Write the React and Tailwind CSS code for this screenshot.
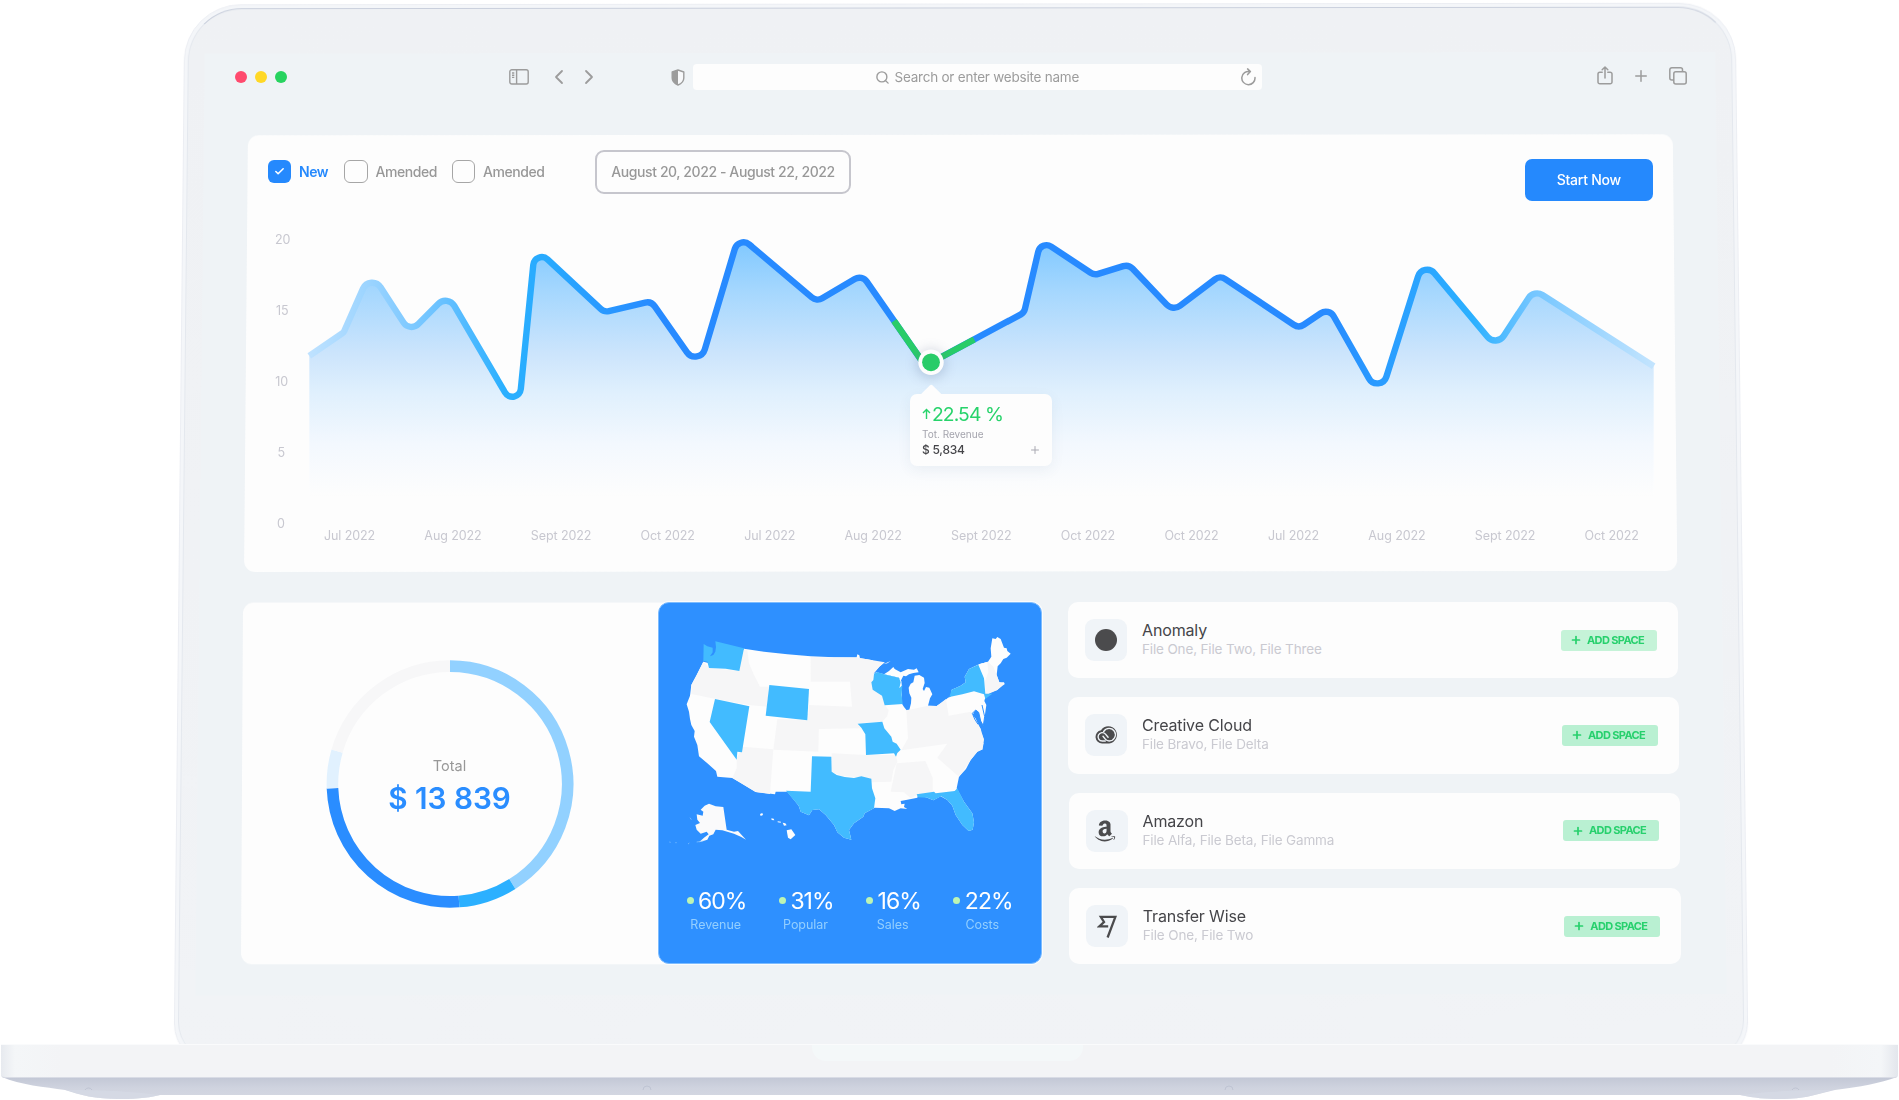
import React from "react";
import { FaAmazon } from "react-icons/fa";
import { ChevronLeft, ChevronRight, Search, Plus, Check } from "lucide-react";

const POINTS = [
  [309.6, 355.5], [344, 332, 5], [370.8, 271.5, 10], [410.3, 332.2, 9.5], [447.9, 294.2, 10],
  [518.5, 414.7, 8.5], [535.3, 247.4, 8.5], [604.5, 311.9, 9], [651.4, 300.9, 9], [699.2, 368.9, 10],
  [739.1, 235.3, 9], [817, 301.2, 9], [862.3, 274.4, 9], [925.5, 365.4, 8], [1024.4, 312.3, 8],
  [1041.3, 239.5, 8.5], [1094.5, 274.8, 9], [1128.9, 264.2, 9], [1173.2, 310.8, 10], [1220.3, 275.2, 9],
  [1299.1, 327.8, 9], [1329.2, 307.5, 9], [1380.1, 397.2, 9.5], [1423.6, 259.6, 9.5], [1496.6, 347, 10],
  [1534.4, 289.3, 10], [1654, 366],
];

// Joins the vertices with straight lines whose corners are circular arcs.
function roundedLine(points) {
  let d = `M${points[0][0]},${points[0][1]}`;
  for (let i = 1; i < points.length - 1; i++) {
    const [x, y, r] = points[i];
    const [px, py] = points[i - 1];
    const [nx, ny] = points[i + 1];
    const la = Math.hypot(px - x, py - y);
    const lb = Math.hypot(nx - x, ny - y);
    const ax = (px - x) / la, ay = (py - y) / la;
    const bx = (nx - x) / lb, by = (ny - y) / lb;
    const angle = Math.acos(ax * bx + ay * by);
    const t = Math.min(r / Math.tan(angle / 2), la * 0.6, lb * 0.6);
    const rr = t * Math.tan(angle / 2);
    const sweep = ax * by - ay * bx < 0 ? 1 : 0;
    d += ` L${x + ax * t},${y + ay * t} A${rr},${rr} 0 0 ${sweep} ${x + bx * t},${y + by * t}`;
  }
  const last = points[points.length - 1];
  return d + ` L${last[0]},${last[1]}`;
}

const LINE = roundedLine(POINTS);

function Lid() {
  return (
    <div className="absolute left-[179px] top-[-1.5px] h-[1061px] w-[1563px] rounded-t-[57px] rounded-b-[40px] border border-[#eceef3] bg-[#f4f6f9] outline outline-transparent [transform:perspective(3000px)_rotateX(2.48deg)_rotate(-0.06deg)]">
      <div className="absolute inset-x-[3px] bottom-[3px] top-[3px] rounded-t-[54px] rounded-b-[38px] border-x border-t-[1.5px] border-x-[#e4e8ee] border-t-[#c9cfdc] bg-gradient-to-b from-[#eff1f4] to-[#f1f3f6]">
        <div className="absolute inset-x-[16px] top-[45px] h-[943px] bg-[#eff3f6]" />
      </div>
    </div>
  );
}

function Base() {
  return (
    <div className="absolute left-0 top-[1044px] w-[1899px]">
      <svg className="absolute left-0 top-[32px] h-[24px] w-[1899px]" viewBox="0 0 1899 24">
        <defs>
          <linearGradient id="under" x1="0" y1="0" x2="0" y2="1">
            <stop offset="0" stopColor="#c2c7d5" />
            <stop offset="0.5" stopColor="#cfd3df" />
            <stop offset="1" stopColor="#d5d8e2" />
          </linearGradient>
        </defs>
        <path d="M2 1 C20 9 45 11 65 14 C80 19 95 23 120 23 C140 23 152 21 160 19 L1740 19 C1755 22 1765 23 1780 23 C1805 23 1818 18 1835 14 C1860 11 1880 7 1897 1 Z" fill="url(#under)" />
        <path d="M66 14 C80 19 95 23 120 23 C140 23 152 21 160 19 C130 15 100 14 66 14 Z" fill="#d6dae5" opacity="0.7" />
        <path d="M1833 14 C1818 18 1805 23 1780 23 C1765 23 1755 22 1740 19 C1770 15 1800 14 1833 14 Z" fill="#d6dae5" opacity="0.7" />
        <g fill="none" stroke="#bfc4d3" strokeWidth="1">
          <path d="M85 14a4 4 0 0 1 7 0M643 14a4 4 0 0 1 8 0M1225 14a4 4 0 0 1 8 0M1792 14a4 4 0 0 1 7 0" />
        </g>
      </svg>
      <div className="relative mx-px h-[34px] rounded-b-[4px] border-t border-t-[#fafbfc] border-b border-b-[#d9dce5] bg-[linear-gradient(90deg,#e7eaef_0px,#f4f6f8_14px,#f3f4f6_60px,#f3f4f6_1830px,#f4f6f8_1880px,#e3e6ec_1897px)]">
        <div className="relative -left-[2px] mx-auto h-[16px] w-[271px] rounded-b-[14px] bg-[#f4f8f9]" />
      </div>
    </div>
  );
}

function BrowserBar() {
  return (
    <header className="flex h-[26px] w-[1432px] items-center text-[#9c9c9c] [&>*]:shrink-0">
      <div className="-ml-[10.5px] flex w-[274px] gap-[7.7px]">
        <span className="size-[12.5px] rounded-full bg-[#ff4a6e]" />
        <span className="size-[12.5px] rounded-full bg-[#ffd826]" />
        <span className="size-[12.5px] rounded-full bg-[#27d35f]" />
      </div>
      <svg className="h-[16px] w-[20px]" viewBox="0 0 20 16" fill="none" stroke="currentColor" strokeWidth="1.4">
        <rect x="0.8" y="0.8" width="18.4" height="14.2" rx="2" />
        <path d="M7.6 1v14M3 4h2.3M3 6.2h2.3M3 8.4h2.3" />
      </svg>
      <ChevronLeft className="ml-[18px] size-[24px]" strokeWidth={1.8} />
      <ChevronRight className="ml-[6px] size-[24px]" strokeWidth={1.8} />
      <svg className="ml-[70.5px] h-[17px] w-[14px]" viewBox="0 0 14 17">
        <path d="M7 1 L12.8 3 V9 C12.8 12.5 10 14.8 7 16 C4 14.8 1.2 12.5 1.2 9 V3 Z" fill="#f7f8fa" stroke="currentColor" strokeWidth="1.4" strokeLinejoin="round" />
        <path d="M7 1 L1.2 3 V9 C1.2 12.5 4 14.8 7 16 Z" fill="currentColor" />
      </svg>
      <div className="ml-[8px] flex h-[26px] w-[568.5px] items-center rounded-[4px] bg-[#fdfdfd] pr-[5px]">
        <Search className="ml-[182px] size-[15px]" strokeWidth={2.2} />
        <span className="ml-[4.5px] flex-1 whitespace-nowrap text-[13.5px] leading-[26px] tracking-[-0.23px]">Search or enter website name</span>
        <svg className="h-[18px] w-[17px]" viewBox="0 0 17 18" fill="none" stroke="currentColor" strokeWidth="1.5" strokeLinecap="round" strokeLinejoin="round">
          <path d="M9.8 3.6 A6.6 6.6 0 1 0 15 9.6 M7.6 0.9 L10.4 3.6 L7.6 6.6" />
        </svg>
      </div>
      <div className="-mt-[3px] ml-[335px] flex items-center gap-[19.5px]">
        <svg className="h-[19px] w-[16px]" viewBox="0 0 16 19" fill="none" stroke="currentColor" strokeWidth="1.5" strokeLinecap="round" strokeLinejoin="round">
          <path d="M5.2 6.2 H2.8 a1.8 1.8 0 0 0 -1.8 1.8 V16 a1.8 1.8 0 0 0 1.8 1.8 H13.2 a1.8 1.8 0 0 0 1.8 -1.8 V8 a1.8 1.8 0 0 0 -1.8 -1.8 H10.8 M8 12 V1.2 M5.2 3.8 L8 1 L10.8 3.8" />
        </svg>
        <Plus className="size-[18px]" strokeWidth={2} />
        <svg className="-ml-[1px] h-[18px] w-[18px]" viewBox="0 0 18 18" fill="none" stroke="currentColor" strokeWidth="1.5">
          <rect x="4.8" y="4.8" width="12.4" height="12.2" rx="2" />
          <path d="M4.8 13 H2.8 a2 2 0 0 1 -2 -2 V2.8 a2 2 0 0 1 2 -2 H11.5 a2 2 0 0 1 2 2 V4.8" />
        </svg>
      </div>
    </header>
  );
}

function Option({ label, checked, className }) {
  return (
    <label className={"flex items-center gap-[8px] text-[14px] tracking-[-0.45px] " + className}>
      {checked ? (
        <span className="flex size-[23px] items-center justify-center rounded-[6px] bg-[#2589fd] text-white">
          <Check className="size-[11px]" strokeWidth={3.4} />
        </span>
      ) : (
        <span className="size-[23.5px] rounded-[6px] border-[1.5px] border-[#a6a6a6]" />
      )}
      <span className={checked ? "font-semibold text-[#2589fd]" : "font-medium text-[#989898]"}>{label}</span>
    </label>
  );
}

function Tooltip() {
  return (
    <div className="absolute left-[601px] top-[184px] h-[72px] w-[142px] rounded-[7px] bg-[#fdfdfd] px-[12px] pt-[8px] shadow-[0_4px_14px_rgba(60,80,120,0.07)]">
      <span className="absolute left-[14px] top-[-7px] size-[14.5px] rotate-45 rounded-tl-[2px] bg-[#fdfdfd]" />
      <div className="relative -top-[0.5px] flex h-[24px] items-center text-[#27d36b]">
        <svg className="h-[12px] w-[9px]" viewBox="0 0 9 12" fill="none" stroke="currentColor" strokeWidth="1.4">
          <path d="M4.5 11V1.5M1 5L4.5 1.5L8 5" />
        </svg>
        <span className="ml-[1px] text-[19.3px] leading-[24px] tracking-[-0.9px]">22.54 %</span>
      </div>
      <div className="text-[10px] leading-[16px] text-[#a4a4ad]">Tot. Revenue</div>
      <div className="flex items-center justify-between">
        <span className="text-[12px] font-medium leading-[16px] tracking-[-0.25px] text-[#454549]">$ 5,834</span>
        <Plus className="-mr-[1px] size-[12px] text-[#a9a9b2]" strokeWidth={2} />
      </div>
    </div>
  );
}

const MONTHS = ["Jul", "Aug", "Sept", "Oct", "Jul", "Aug", "Sept", "Oct", "Oct", "Jul", "Aug", "Sept", "Oct"];

function ChartCard() {
  return (
    <section className="relative mt-[44px] h-[436.5px] w-[1431px]">
      <div className="absolute inset-y-0 left-[1px] right-[1px] rounded-[11px] bg-[#fdfdfd] outline outline-transparent [transform:perspective(3000px)_rotateX(2.3deg)_rotate(-0.04deg)]" />
      <div className="relative pt-[16px]">
        <div className="flex h-[60px] items-start pl-[23px]">
          <div className="flex h-[43px] items-center">
            <Option label="New" checked className="w-[76px]" />
            <Option label="Amended" className="w-[107.5px]" />
            <Option label="Amended" className="w-[143.5px]" />
            <div className="flex h-[44px] w-[256px] items-center justify-center rounded-[9px] border-2 border-[#c6c6cd] text-[14px] font-medium tracking-[-0.41px] text-[#989898]">
              <span className="whitespace-nowrap">August 20, 2022 - August 22, 2022</span>
            </div>
          </div>
          <button className="ml-[674px] mt-[8.5px] h-[42px] w-[127.5px] rounded-[7px] bg-[#2589fd] text-[14px] font-medium tracking-[-0.25px] text-white">Start Now</button>
        </div>
        <div className="relative flex h-[315px]">
          <div className="flex w-[64px] flex-col items-center pl-[23px] pr-[15px] pt-[21px] text-[12.5px] leading-[18px] text-[#c8c8d0]">
            <div className="flex h-[301.5px] shrink-0 flex-col items-center justify-between">
              <span className="ml-[3.5px]">20</span>
              <span className="ml-[2.5px]">15</span>
              <span className="ml-[1.5px]">10</span>
              <span className="ml-[0.5px]">5</span>
              <span>0</span>
            </div>
          </div>
          <div className="relative h-[290px] w-[1346px]">
            <svg className="h-[290px] w-[1346px] overflow-visible" viewBox="309 210 1346 290">
              <defs>
                <linearGradient id="area" gradientUnits="userSpaceOnUse" x1="0" y1="240" x2="0" y2="495">
                  <stop offset="0" stopColor="#7fc8ff" />
                  <stop offset="0.2" stopColor="#a5d7fe" />
                  <stop offset="0.45" stopColor="#cde5fc" />
                  <stop offset="0.6" stopColor="#e0f0fd" />
                  <stop offset="0.8" stopColor="#f3f8fe" />
                  <stop offset="1" stopColor="#fdfdfd" />
                </linearGradient>
                <linearGradient id="stroke" gradientUnits="userSpaceOnUse" x1="309" y1="0" x2="1654" y2="0">
                  <stop offset="0" stopColor="#bfe2ff" />
                  <stop offset="0.047" stopColor="#99d3ff" />
                  <stop offset="0.1" stopColor="#68c1ff" />
                  <stop offset="0.145" stopColor="#2bb0ff" />
                  <stop offset="0.18" stopColor="#28a9fe" />
                  <stop offset="0.22" stopColor="#2998ff" />
                  <stop offset="0.26" stopColor="#278aff" />
                  <stop offset="0.755" stopColor="#278aff" />
                  <stop offset="0.8" stopColor="#2a9dff" />
                  <stop offset="0.865" stopColor="#2bb0ff" />
                  <stop offset="0.91" stopColor="#74c6ff" />
                  <stop offset="1" stopColor="#c3e4fe" />
                </linearGradient>
                <filter id="glow" x="-150%" y="-150%" width="400%" height="400%">
                  <feGaussianBlur stdDeviation="6" />
                </filter>
              </defs>
              <g transform="translate(-0.3 0.3)">
                <path d={LINE + " V495 H309.6 Z"} fill="url(#area)" />
                <path d={LINE} fill="none" stroke="url(#stroke)" strokeWidth="6.4" />
                <path d="M894.3 320.6 L925.5 365.4 L974.5 339.2" fill="none" stroke="#29cc68" strokeWidth="6.4" />
              </g>
              <circle cx="931" cy="364" r="15" fill="#5a6a90" opacity="0.25" filter="url(#glow)" />
              <circle cx="931" cy="362.3" r="12.7" fill="#fdfdfd" />
              <circle cx="931" cy="362.3" r="8.9" fill="#29cc68" />
            </svg>
            <Tooltip />
          </div>
        </div>
        <div className="ml-[79px] flex w-[1315px] justify-between text-[12.5px] leading-[21px] tracking-[-0.1px] text-[#c8c8d0]">
          {MONTHS.map((m, i) => (
            <span key={i} className="whitespace-nowrap">{m} 2022</span>
          ))}
        </div>
      </div>
    </section>
  );
}

const SEGMENTS = [
  { from: 0, to: 148, color: "#92d1ff" },
  { from: 148, to: 175.6, color: "#2bb0ff" },
  { from: 175.6, to: 267.9, color: "#2a8dff" },
  { from: 267.9, to: 286.2, color: "#e1f1fe" },
  { from: 286.2, to: 360, color: "#f7f7f8" },
];

function arc(from, to) {
  const p = (a) => {
    const t = ((a - 90) * Math.PI) / 180;
    return `${124 + 117.6 * Math.cos(t)},${124 + 117.9 * Math.sin(t)}`;
  };
  return `M${p(from)} A117.6,117.9 0 ${to - from > 180 ? 1 : 0} 1 ${p(to)}`;
}

function TotalCard() {
  return (
    <section className="relative h-[362px] w-[431px] shrink-0">
      <div className="absolute inset-0 rounded-[11px] bg-[#fdfdfd] outline outline-transparent [transform-origin:100%_50%] [transform:perspective(3000px)_rotateX(2.2deg)]" />
      <div className="relative ml-[83.5px] mt-[57.5px] size-[248px]">
        <svg className="absolute inset-0 size-[248px]" viewBox="0 0 248 248">
          {SEGMENTS.map((s) => (
            <path key={s.from} d={arc(s.from, s.to)} fill="none" stroke={s.color} strokeWidth="11.6" />
          ))}
        </svg>
        <div className="relative flex flex-col items-center pt-[95px]">
          <span className="text-[14.5px] leading-[22px] text-[#989898]">Total</span>
          <span className="whitespace-nowrap text-[29.7px] font-semibold leading-[43px] text-[#2a8dff]">$ 13 839</span>
        </div>
      </div>
    </section>
  );
}

function UsMap() {
  return (
    <svg className="h-[220px] w-[383px]" viewBox="12 99 1149 660">
      <g fill="#fdfdfd">
        <path d="M166 205L210 190L262 175L270 161L330 170L400 178L470 184L540 187L608 187L610 178L616 181L618 190L640 193L655 196L665 203L692 202L676 215L658 236L668 232L690 238L735 248L742 258L744 275L743 325L750 336L758 346L766 344L771 325L772 308L766 295L764 278L770 266L778 262L782 242L796 240L810 248L812 264L806 282L810 288L816 276L826 278L835 298L828 310L822 332L848 333L866 322L882 308L890 305L893 284L920 272L935 262L932 245L945 222L975 208L1002 200L1012 185L1010 160L1015 130L1025 132L1030 126L1040 132L1050 158L1058 160L1060 168L1070 176L1058 188L1048 192L1040 205L1031 214L1028 240L1036 262L1050 262L1052 267L1040 272L1030 285L1010 292L996 300L991 318L997 330L992 365L988 392L980 378L974 352L965 345L960 352L955 362L966 372L968 385L980 402L980 410L970 410L984 420L990 434L975 432L978 442L990 446L976 456L986 463L970 470L950 495L936 522L915 545L908 580L930 620L955 655L960 682L956 704L944 708L925 690L905 660L895 632L880 615L860 604L838 616L820 608L792 600L790 608L760 614L740 618L742 628L752 626L750 636L760 642L740 640L722 648L705 640L662 638L632 655L628 665L600 685L585 705L592 734L570 728L550 712L540 690L515 660L495 643L475 645L465 661L440 650L434 632L400 590L365 590L363 598L305 591L262 565L235 549L190 545L186 528L160 505L135 484L130 450L120 425L122 408L112 390L108 372L105 350L98 328L108 302L112 270L128 240L148 200Z" />
        <path d="M690 238L705 228L718 216L722 222L740 232L762 222L780 224L788 220L794 232L778 234L765 238L756 244L748 242L740 258L735 248Z" />
        <path d="M688 208L710 198L700 205Z" />
        <path d="M398 706L412 703L424 720L410 733L402 728Z" />
        <path d="M318 657l7-3 2 6-7 3zM352 670l7 1 2 5-8-1zM371 679l10 1-1 3-9-1zM386 683l8 2 4 6-8 1z" />
      </g>
      <g fill="#f6f6f7">
        <path d="M148 200L165 218L255 228L268 165L280 166L285 205L300 240L318 275L345 275L340 335L285 330L185 312L112 297L112 270L128 240Z" />
        <path d="M470 186L612 188L692 202L676 215L658 236L653 265L658 285L685 300L692 330L704 345L700 362L685 380L612 385L620 400L495 402L370 372L462 376L465 330L594 335L588 260L470 260Z" />
        <path d="M370 372L495 385L493 470L358 464Z" />
        <path d="M266 455L358 463L348 597L305 591L235 549L248 520L248 490Z" />
        <path d="M533 475L636 480L726 480L730 500L718 525L712 560L652 562L650 550L600 546L560 542L533 530Z" />
        <path d="M766 344L822 332L848 333L876 312L884 362L950 350L965 372L980 402L990 434L986 463L970 470L950 495L915 545L850 488L880 446L742 466L762 430L757 345Z" />
        <path d="M728 505L814 498L836 548L836 590L790 600L770 610L750 592L710 590Z" />
        <path d="M975 208L1002 200L1018 215L1028 240L1036 262L1052 267L1030 285L996 300L992 260L1000 240Z" />
      </g>
      <path d="M140 644L152 632L165 626L185 634L208 636L218 704L240 710L252 708L276 734L262 726L240 716L205 706L185 704L178 718L166 722L160 734L135 742L150 728L164 718L158 710L140 716L128 704L124 690L138 684L130 674L128 658L146 662L148 650Z" fill="#fafafb" />
      <path d="M975 208L1000 202L1003 232L992 258Z" fill="#fdfdfd" />
      <path d="M984 330L992 365L988 392L980 378L974 352L965 345L955 355L962 372L972 388" fill="none" stroke="#2e90ff" strokeWidth="3" />
      <path d="M102 747l4-3M128 741l20-3M108 668l4 6M46 741l4 1M64 743l4 0" stroke="#8fc8ff" strokeWidth="2" />
      <g fill="#42bbff">
        <path d="M149 147L160 154L176 158L176 172L168 184L178 180L184 170L186 156L184 139L270 160L256 228L215 221L165 219L160 200L148 198Z" />
        <path d="M346 270L465 282L460 376L335 362Z" />
        <path d="M183 312L286 334L264 472L250 470L248 494L167 381Z" />
        <path d="M660 236L670 231L690 238L735 248L740 262L736 280L745 270L743 300L746 327L692 331L684 302L656 284L652 262L658 255Z" />
        <path d="M611 386L685 380L691 400L712 425L716 440L728 446L740 464L730 474L726 485L720 475L636 480L634 418L622 398Z" />
        <path d="M474 484L532 485L533 530L548 540L572 546L600 549L622 544L652 551L654 580L664 610L660 640L632 655L628 665L600 685L585 705L592 734L570 728L550 712L540 690L515 660L495 643L475 645L465 661L440 650L434 632L396 587L470 590Z" />
        <path d="M788 598L840 590L845 595L902 588L910 580L930 620L955 655L960 682L956 704L944 708L925 690L905 660L895 632L880 615L862 604L838 616L820 608L792 607Z" />
        <path d="M886 306L893 284L920 272L935 262L932 245L945 222L973 209L990 250L994 296L1015 296L994 312L990 298L960 289L925 298Z" />
      </g>
    </svg>
  );
}

const STATS = [
  ["60%", "Revenue"],
  ["31%", "Popular"],
  ["16%", "Sales"],
  ["22%", "Costs"],
];

function MapCard() {
  return (
    <section className="relative z-10 -ml-[15px] h-[362px] w-[383.5px] shrink-0">
      <div className="absolute inset-0 rounded-[11px] border border-[#7dbcff] bg-[#2e90ff] shadow-[0_0_0_1px_rgba(255,255,255,0.7)]" />
      <div className="relative pt-[25.5px]">
        <UsMap />
        <div className="flex justify-between pl-[28.5px] pr-[29px] pt-[40px]">
          {STATS.map(([value, label]) => (
            <div key={label} className="flex flex-col items-center">
              <div className="flex items-center gap-[4.5px]">
                <span className="size-[7px] rounded-full bg-[#bdf5b4]" />
                <span className="text-[23px] leading-[26px] tracking-[-1px] text-white">{value}</span>
              </div>
              <span className="mr-[1.5px] text-[12.5px] leading-[22px] tracking-[-0.05px] text-[#93cfff]">{label}</span>
            </div>
          ))}
        </div>
      </div>
    </section>
  );
}

function CloudLogo() {
  return (
    <svg className="h-[18px] w-[23px]" viewBox="0 0 23 18">
      <path d="M7.2 17.4 a6.6 6.6 0 0 1 -1.2 -13.1 A8.6 8.6 0 1 1 14.2 17.4 Z" fill="#4b4b4d" />
      <g fill="none" stroke="#f0f4f8" strokeWidth="1.4" strokeLinecap="round">
        <path d="M8.6 5.6 a6.3 6.3 0 1 1 5.6 9.4 c-1.7 0 -2.9 -0.7 -3.9 -1.9 l-2.3 -2.8" />
        <path d="M10.3 15 H7.3 a4.2 4.2 0 1 1 3.2 -6.9 l2.6 3.1" />
      </g>
    </svg>
  );
}

function WiseLogo() {
  return (
    <svg className="h-[23px] w-[20px]" viewBox="0 0 20 23" fill="none" stroke="#4b4b4d" strokeWidth="2.3">
      <path d="M10.6 22.5 L18.4 1.8 H3.8 L7 7 L2.4 11.4 H11.2" />
    </svg>
  );
}

const FILES = [
  { name: "Anomaly", files: "File One, File Two, File Three", icon: <span className="size-[21.5px] rounded-full bg-[#4b4b4d]" />, row: "w-[609.5px]", tag: "bg-[#c5f3d8]" },
  { name: "Creative Cloud", files: "File Bravo, File Delta", icon: <CloudLogo />, row: "w-[610.5px]", tag: "bg-[#b9f0d2]" },
  { name: "Amazon", files: "File Alfa, File Beta, File Gamma", icon: <FaAmazon className="mr-[3px] size-[24px] text-[#4b4b4d]" />, row: "ml-[0.5px] w-[611px]", tag: "bg-[#b9f0d2]" },
  { name: "Transfer Wise", files: "File One, File Two", icon: <WiseLogo />, row: "ml-[0.8px] w-[612px]", tag: "bg-[#b9f0d2]" },
];

function FileList() {
  return (
    <section className="ml-[26.5px] flex flex-col gap-[19px]">
      {FILES.map((f) => (
        <div key={f.name} className={"flex h-[76.3px] items-center rounded-[10px] bg-[#fdfdfd] pl-[17px] pr-[21px] " + f.row}>
          <div className="flex size-[42px] items-center justify-center rounded-[9px] bg-[#f0f4f8]">{f.icon}</div>
          <div className="-mt-[1px] ml-[15px] flex-1">
            <div className="text-[16px] leading-[19px] tracking-[-0.15px] text-[#454549]">{f.name}</div>
            <div className="text-[13.5px] leading-[18px] tracking-[-0.15px] text-[#cacad1]">{f.files}</div>
          </div>
          <button className={"flex h-[21px] w-[95.5px] items-center rounded-[3px] pl-[9px] text-[11px] font-bold tracking-[-0.62px] text-[#27d06d] " + f.tag}>
            <Plus className="size-[12px]" strokeWidth={3.4} />
            <span className="ml-[5px] whitespace-nowrap">ADD SPACE</span>
          </button>
        </div>
      ))}
    </section>
  );
}

export default function App() {
  return (
    <div className="relative h-[1100px] w-[1899px] overflow-hidden bg-white font-['Inter',sans-serif]">
      <Lid />
      <main className="relative ml-[245px] pt-[64px]">
        <BrowserBar />
        <ChartCard />
        <div className="-ml-[3px] mt-[31.5px] flex">
          <TotalCard />
          <MapCard />
          <FileList />
        </div>
      </main>
      <Base />
    </div>
  );
}
